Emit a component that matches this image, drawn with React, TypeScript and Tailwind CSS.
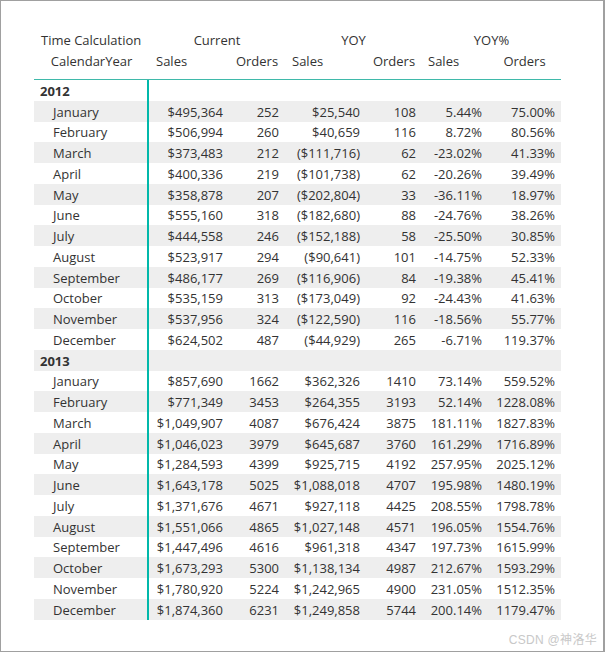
import React from "react";

type Row = [string, string, string, string, string, string, string];

const data: { year: string; rows: Row[] }[] = [
  {
    year: "2012",
    rows: [
      ["January", "$495,364", "252", "$25,540", "108", "5.44%", "75.00%"],
      ["February", "$506,994", "260", "$40,659", "116", "8.72%", "80.56%"],
      ["March", "$373,483", "212", "($111,716)", "62", "-23.02%", "41.33%"],
      ["April", "$400,336", "219", "($101,738)", "62", "-20.26%", "39.49%"],
      ["May", "$358,878", "207", "($202,804)", "33", "-36.11%", "18.97%"],
      ["June", "$555,160", "318", "($182,680)", "88", "-24.76%", "38.26%"],
      ["July", "$444,558", "246", "($152,188)", "58", "-25.50%", "30.85%"],
      ["August", "$523,917", "294", "($90,641)", "101", "-14.75%", "52.33%"],
      ["September", "$486,177", "269", "($116,906)", "84", "-19.38%", "45.41%"],
      ["October", "$535,159", "313", "($173,049)", "92", "-24.43%", "41.63%"],
      ["November", "$537,956", "324", "($122,590)", "116", "-18.56%", "55.77%"],
      ["December", "$624,502", "487", "($44,929)", "265", "-6.71%", "119.37%"],
    ],
  },
  {
    year: "2013",
    rows: [
      ["January", "$857,690", "1662", "$362,326", "1410", "73.14%", "559.52%"],
      ["February", "$771,349", "3453", "$264,355", "3193", "52.14%", "1228.08%"],
      ["March", "$1,049,907", "4087", "$676,424", "3875", "181.11%", "1827.83%"],
      ["April", "$1,046,023", "3979", "$645,687", "3760", "161.29%", "1716.89%"],
      ["May", "$1,284,593", "4399", "$925,715", "4192", "257.95%", "2025.12%"],
      ["June", "$1,643,178", "5025", "$1,088,018", "4707", "195.98%", "1480.19%"],
      ["July", "$1,371,676", "4671", "$927,118", "4425", "208.55%", "1798.78%"],
      ["August", "$1,551,066", "4865", "$1,027,148", "4571", "196.05%", "1554.76%"],
      ["September", "$1,447,496", "4616", "$961,318", "4347", "197.73%", "1615.99%"],
      ["October", "$1,673,293", "5300", "$1,138,134", "4987", "212.67%", "1593.29%"],
      ["November", "$1,780,920", "5224", "$1,242,965", "4900", "231.05%", "1512.35%"],
      ["December", "$1,874,360", "6231", "$1,249,858", "5744", "200.14%", "1179.47%"],
    ],
  },
];

const widths = ["w-[80px]", "w-[56px]", "w-[81px]", "w-[56px]", "w-[66px]", "w-[73px]"];

const DataRow = ({ row, shaded }: { row: Row; shaded: boolean }) => (
  <div className={`flex h-[20.75px] ${shaded ? "bg-[#eeeeee]" : ""}`}>
    <div className="w-[115px] h-full pt-[2px] border-r-2 border-[#01b8aa] pl-[19px] flex items-center">
      {row[0]}
    </div>
    {row.slice(1).map((v, i) => (
      <div key={i} className={`${widths[i]} h-full pt-[2px] pr-[6px] flex items-center justify-end`}>
        {v}
      </div>
    ))}
  </div>
);

export default function App() {
  let idx = 0;
  return (
    <div
      className="relative w-[606px] h-[653px] bg-white text-[#333333] text-[13px] leading-none"
      style={{ fontFamily: '"Open Sans", "Noto Sans", sans-serif' }}
    >
      <div className="relative w-[605px] h-[652px] border border-[#a0a0a0] border-r-2 pl-[33px] pt-[29px]">
        <div className="w-[527px]">
          <div className="flex h-[21px] items-center">
            <div className="w-[115px] pl-[7px]">Time Calculation</div>
            <div className="w-[136px] text-center">Current</div>
            <div className="w-[137px] text-center">YOY</div>
            <div className="w-[139px] text-center">YOY%</div>
          </div>
          <div className="flex h-[29px] items-start pt-[4px] border-b border-[#3fb9aa]">
            <div className="w-[115px] text-center">CalendarYear</div>
            <div className="w-[80px] pl-[7px]">Sales</div>
            <div className="w-[56px] text-center">Orders</div>
            <div className="w-[81px] pl-[7px]">Sales</div>
            <div className="w-[56px] text-center">Orders</div>
            <div className="w-[66px] pl-[6px]">Sales</div>
            <div className="w-[73px] text-center">Orders</div>
          </div>
          {data.map((g) => {
            const yearShaded = idx++ % 2 === 1;
            return (
              <div key={g.year}>
                <div className={`flex h-[20.75px] ${yearShaded ? "bg-[#eeeeee]" : ""}`}>
                  <div className="w-[115px] h-full pt-[2px] border-r-2 border-[#01b8aa] pl-[6px] font-bold flex items-center">
                    {g.year}
                  </div>
                </div>
                {g.rows.map((r) => {
                  const shaded = idx++ % 2 === 1;
                  return <DataRow key={g.year + r[0]} row={r} shaded={shaded} />;
                })}
              </div>
            );
          })}
        </div>
        <div
          className="absolute right-[6px] bottom-[5px] text-[12px] text-[#c8c8c8] tracking-[0.3px]"
          style={{ fontFamily: '"Liberation Sans", "Noto Sans CJK SC", sans-serif' }}
        >
          CSDN @神洛华
        </div>
      </div>
    </div>
  );
}
